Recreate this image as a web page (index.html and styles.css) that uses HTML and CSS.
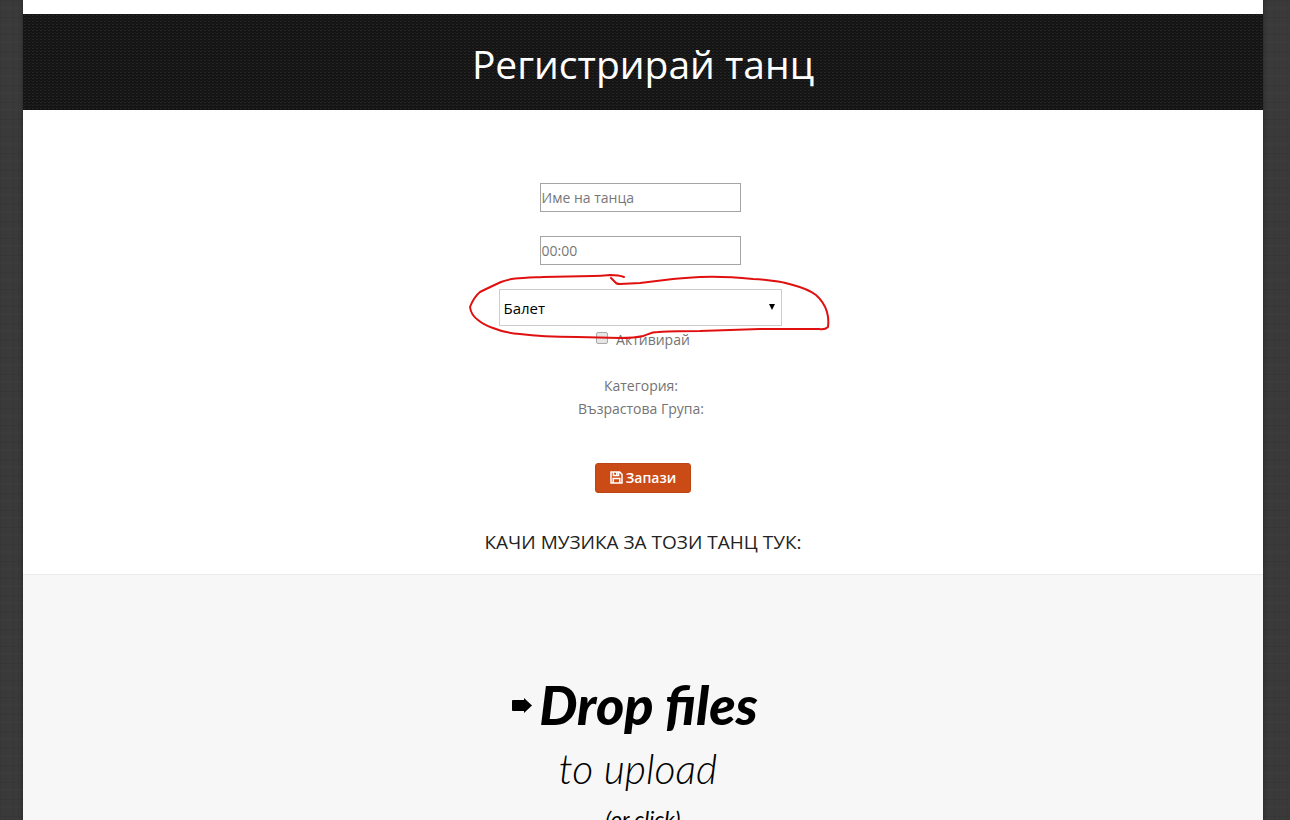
FILE: index.html
```html
<!DOCTYPE html>
<html lang="bg">
<head>
  <meta charset="UTF-8">
  <meta name="viewport" content="width=device-width, initial-scale=1">
  <title>Регистрирай танц</title>
  <link rel="stylesheet" href="styles.css">
</head>
<body>
  <main class="page">
    <header class="page-header">
      <h1>Регистрирай танц</h1>
    </header>

    <form class="dance-form">
      <div class="fields">
        <input class="text-field" type="text" placeholder="Име на танца" aria-label="Име на танца">
        <input class="text-field" type="text" placeholder="00:00" aria-label="Времетраене">
        <div class="select-wrap">
          <select class="dance-type" aria-label="Вид танц">
            <option>Балет</option>
          </select>
          <svg class="marker" viewBox="0 0 366 68" aria-hidden="true">
            <path d="M157 4Q152 2 143 2Q134 3 126 3L76 4C54 5 44 5 34 9Q21 15 13 19C8 23 5 29 3 34Q4 42 11 47Q17 52 26 55Q38 60 53 61C75 64 94 64 110 64L153 65C166 65 172 64 176 63C182 61 184 59 191 59Q210 58 233 58L293 56L352 56Q358 57 361 54Q362 46 360 39Q357 29 349 22Q341 16 326 12Q308 7 286 6Q256 3 233 4Q217 5 206 6Q190 8 173 10L153 11Q149 11 148 9L144 5"/>
          </svg>
        </div>
      </div>

      <label class="activate"><input type="checkbox"> Активирай</label>

      <div class="details">
        <p>Категория:</p>
        <p>Възрастова Група:</p>
      </div>

      <button class="save" type="button">
        <svg viewBox="0 0 13 13" aria-hidden="true">
          <path d="M1 1h8.6L12 3.4V12H1zM3.4 1v3.6h5.2V1M6.8 1.6v2.2M3.2 12V7.6h6.6V12"/>
        </svg>
        Запази
      </button>

      <h2>Качи музика за този танц тук:</h2>
    </form>

    <section class="dropzone">
      <p class="drop-title">
        <svg class="arrow" viewBox="0 0 20 15" aria-hidden="true"><path d="M1 2h11V0l8 7.500-8 7.500v-2H1q-1 0-1-1V3q0-1 1-1z"/></svg>
        <span>Drop files</span>
      </p>
      <p class="drop-sub">to upload</p>
      <p class="drop-hint">(or click)</p>
    </section>
  </main>
</body>
</html>
```
FILE: styles.css
```css
* { margin: 0; padding: 0; box-sizing: border-box; }

body {
  height: 100vh;
  overflow: hidden;
  padding: 0 27px 0 23px;
  font-family: "Comic Sans MS", "Open Sans", sans-serif;
  font-size: 14px;
  line-height: 23px;
  color: #747474;
  background-color: #3a3a3a;
  background-image:
    repeating-linear-gradient(90deg, rgba(0, 0, 0, 0.06) 0 1px, transparent 1px 5px, rgba(0, 0, 0, 0.04) 5px 6px, transparent 6px 13px),
    repeating-linear-gradient(rgba(0, 0, 0, 0.06) 0 1px, transparent 1px 7px, rgba(255, 255, 255, 0.01) 7px 9px, transparent 9px 17px);
}

.page {
  min-height: 100vh;
  padding-top: 14px;
  background: #fff;
  box-shadow: 0 0 4px rgba(0, 0, 0, 0.4);
}

.page-header {
  padding: 22px 20px 18px;
  text-align: center;
  background-color: #141414;
  background-image:
    radial-gradient(rgba(255, 255, 255, 0.07) 1px, transparent 1px),
    radial-gradient(rgba(255, 255, 255, 0.03) 1px, transparent 1px);
  background-size: 4px 3px;
  background-position: 0 0, 2px 2px;
}

.page-header h1 {
  font-size: 39px;
  line-height: 56px;
  font-weight: 500;
  color: #fff;
}

.dance-form {
  display: flex;
  flex-direction: column;
  align-items: center;
  padding: 73px 20px 20px;
}

.fields {
  display: flex;
  flex-direction: column;
  align-items: center;
  gap: 24px;
  padding-right: 6px;
}

.text-field {
  width: 201px;
  height: 29px;
  padding: 0 1px;
  border: 1px solid #a5a5a5;
  font: inherit;
  color: #333;
}

.text-field::placeholder { color: #777; }

.select-wrap {
  position: relative;
  width: 283px;
}

.select-wrap::after {
  content: '';
  position: absolute;
  top: 15px;
  right: 7px;
  border: solid transparent;
  border-width: 6px 3px 0;
  border-top-color: #000;
  pointer-events: none;
}

.dance-type {
  display: block;
  width: 100%;
  height: 37px;
  padding: 0 4px;
  appearance: none;
  border: 1px solid #ccc;
  border-radius: 0;
  background: #fff;
  font-family: "Open Sans", sans-serif;
  font-size: 15px;
  color: #000;
}

/* hand-drawn circle around the dance type */
.marker {
  position: absolute;
  top: -16px;
  left: -32px;
  z-index: 1;
  width: 366px;
  height: 68px;
  fill: none;
  stroke: #e01010;
  stroke-width: 2;
  stroke-linecap: round;
  stroke-linejoin: round;
  pointer-events: none;
}

.activate {
  display: flex;
  align-items: center;
  gap: 8px;
  margin-top: 2px;
}

.activate input {
  width: 12px;
  height: 12px;
  margin-bottom: 3px;
  appearance: none;
  border: 1px solid #a9a9a9;
  border-radius: 2px;
  background: #e6e6e6;
}

.activate input:checked { background: #777; }

.details {
  margin-top: 23px;
  padding-right: 4px;
  text-align: center;
}

.save {
  display: flex;
  align-items: center;
  gap: 3px;
  height: 30px;
  margin-top: 43px;
  padding: 0 14px 1px;
  border: 1px solid #bd4513;
  border-radius: 3px;
  background: #cb4b16;
  font-family: "Open Sans", sans-serif;
  font-size: 14px;
  font-weight: 600;
  color: #fff;
  cursor: pointer;
}

.save svg {
  width: 13px;
  height: 13px;
  fill: none;
  stroke: #fff;
  stroke-width: 1.5;
}

.dance-form h2 {
  margin-top: 37px;
  font-size: 19px;
  line-height: 24px;
  font-weight: 400;
  text-transform: uppercase;
  color: #222;
}

.dropzone {
  padding: 96px 20px 40px;
  border-top: 1px solid #ebebeb;
  background: #f7f7f7;
  font-family: Lato, sans-serif;
  font-style: italic;
  text-align: center;
  color: #000;
}

.drop-title {
  display: flex;
  justify-content: center;
  align-items: center;
  gap: 7px;
  padding-right: 16px;
  font-size: 54px;
  line-height: 68px;
  font-weight: 900;
}

.arrow {
  width: 20px;
  height: 15px;
}

.drop-sub {
  padding-right: 10px;
  font-size: 41px;
  line-height: 60px;
  font-weight: 300;
}

.drop-hint {
  font-size: 22px;
  line-height: 40px;
}
```
